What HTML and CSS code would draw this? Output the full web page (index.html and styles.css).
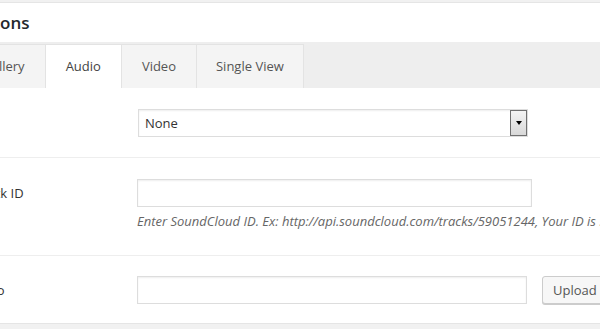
FILE: index.html
```html
<!DOCTYPE html>
<html>
<head>
	<meta charset="UTF-8">
	<title>Portfolio Options</title>
	<link rel="stylesheet" href="styles.css">
</head>
<body>

<div class="page">
	<div class="panel">
		<h2 class="panel-title">Portfolio Options</h2>

		<!-- tabs -->
		<ul class="tabs">
			<li class="tab">Image</li>
			<li class="tab">Gallery</li>
			<li class="tab active">Audio</li>
			<li class="tab">Video</li>
			<li class="tab narrow">Single View</li>
		</ul>

		<!-- audio fields -->
		<div class="form-row">
			<label class="label" for="AudioType">Audio Type</label>
			<div class="field">
				<span class="select-wrap">
					<select id="AudioType" class="select">
						<option selected>None</option>
						<option>SoundCloud</option>
						<option>Self Hosted</option>
					</select>
				</span>
			</div>
		</div>

		<div class="form-row tall">
			<label class="label" for="TrackID">SoundCloud Track ID</label>
			<div class="field">
				<input id="TrackID" class="text wide" type="text">
				<p class="hint">Enter SoundCloud ID. Ex: http://api.soundcloud.com/tracks/59051244, Your ID is 59051244</p>
			</div>
		</div>

		<div class="form-row last">
			<label class="label" for="AudioFile">Self Hosted Audio</label>
			<div class="field inline">
				<input id="AudioFile" class="text" type="text">
				<button class="button">Upload</button>
			</div>
		</div>
	</div>
</div>

</body>
</html>
```

FILE: styles.css
```css
	html, body { margin: 0; background-color: #f1f1f1; }
	body { font-family: "Open Sans", sans-serif; font-size: 13px; color: #444; overflow: hidden; }

	.page { margin-left: -124px; padding-top: 2px; width: 820px; }
	.panel { background-color: #fff; border: 1px solid #e5e5e5; box-shadow: 0 1px 1px rgba(0,0,0,0.04); }
	.panel-title { margin: 0; height: 39px; line-height: 39px; padding-left: 12px; font-size: 17px; font-weight: 600; color: #23282d; }

	.tabs { display: flex; margin: 0; padding: 2px 0 0 6px; list-style: none; background-color: #eee; }
	.tab { height: 43px; line-height: 43px; padding: 0 20px; color: #555; background-color: #f4f4f4;
		border: 1px solid #e3e3e3; border-bottom: 0; margin-right: -1px; }
	.tab.narrow { padding: 0 19px 0 19px; }
	.tab.active { background-color: #fff; color: #444; }

	.form-row { display: grid; grid-template-columns: 240px 1fr; padding: 21px 0 20px 20px; border-bottom: 1px solid #eee; }
	.form-row.tall { padding-bottom: 21px; }
	.form-row.last { border-bottom: 0; padding-top: 20px; padding-bottom: 19px; }
	.label { line-height: 28px; color: #333; }
	.field { min-width: 0; }
	.field.inline { display: flex; gap: 15px; }

	.text { box-sizing: border-box; height: 28px; width: 390px; margin: 0; border: 1px solid #ddd; background-color: #fff;
		box-shadow: inset 0 1px 2px rgba(0,0,0,0.07); font: inherit; padding: 0 6px; }
	.text.wide { width: 395px; }

	.select-wrap { position: relative; display: inline-block; margin-left: 1px; }
	.select { box-sizing: border-box; -webkit-appearance: none; appearance: none; height: 28px; width: 390px; margin: 0;
		border: 1px solid #ddd; background-color: #fff; box-shadow: inset 0 1px 2px rgba(0,0,0,0.07);
		font: inherit; color: #333; padding: 0 6px; display: block; }
	.select-wrap::before { content: ""; position: absolute; top: 1px; right: 1px; width: 15px; height: 24px;
		border: 1px solid #707070; background: linear-gradient(#f4f4f4, #d8d8d8); pointer-events: none; }
	.select-wrap::after { content: ""; position: absolute; top: 12px; right: 6px; border-left: 3.5px solid transparent;
		border-right: 3.5px solid transparent; border-top: 4px solid #000; pointer-events: none; }

	.hint { margin: 4px 0 0; line-height: 20px; font-style: italic; color: #666; white-space: nowrap; padding-bottom: 3px; }

	.button { box-sizing: border-box; height: 28px; padding: 0 10px; border: 1px solid #ccc; border-radius: 3px;
		background-color: #f7f7f7; box-shadow: 0 1px 0 #ccc; font: inherit; color: #555; cursor: pointer; }
```
